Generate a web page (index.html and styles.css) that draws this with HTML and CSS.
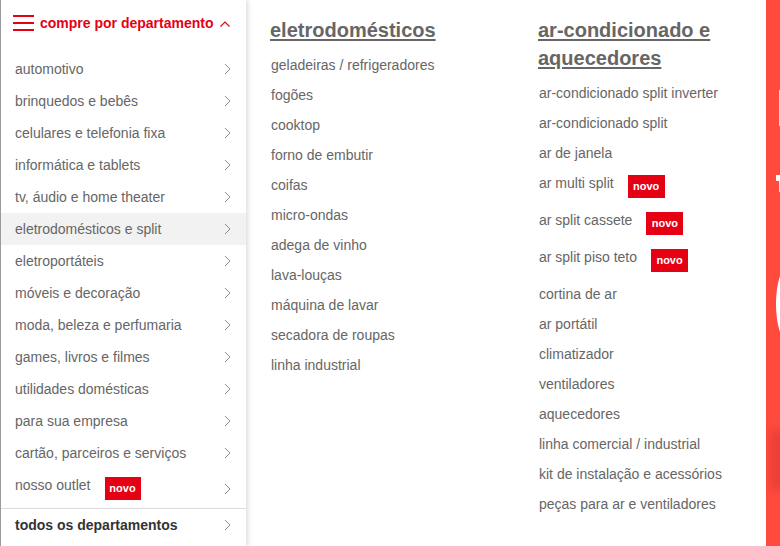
FILE: index.html
```html
<!DOCTYPE html>
<html lang="pt-BR">
<head>
<meta charset="utf-8">
<title>compre por departamento</title>
<link rel="stylesheet" href="styles.css">
</head>
<body>
<div class="page">
  <aside class="dept">
    <div class="dept-head">
      <span class="burger"><i></i><i></i><i></i></span>
      <span class="dept-title">compre por departamento</span>
      <svg class="up" width="10" height="6" viewBox="0 0 10 6"><polyline points="0.5,5.5 5,1 9.5,5.5" fill="none" stroke="#e60014" stroke-width="1.2"/></svg>
    </div>
    <ul class="dept-list">
      <li class="dept-item"><span class="lbl">automotivo</span><svg class="chev" width="7" height="12" viewBox="0 0 7 12"><polyline points="1,1 6,6 1,11" fill="none" stroke="#8a8a8a" stroke-width="1"/></svg></li>
      <li class="dept-item"><span class="lbl">brinquedos e bebês</span><svg class="chev" width="7" height="12" viewBox="0 0 7 12"><polyline points="1,1 6,6 1,11" fill="none" stroke="#8a8a8a" stroke-width="1"/></svg></li>
      <li class="dept-item"><span class="lbl">celulares e telefonia fixa</span><svg class="chev" width="7" height="12" viewBox="0 0 7 12"><polyline points="1,1 6,6 1,11" fill="none" stroke="#8a8a8a" stroke-width="1"/></svg></li>
      <li class="dept-item"><span class="lbl">informática e tablets</span><svg class="chev" width="7" height="12" viewBox="0 0 7 12"><polyline points="1,1 6,6 1,11" fill="none" stroke="#8a8a8a" stroke-width="1"/></svg></li>
      <li class="dept-item"><span class="lbl">tv, áudio e home theater</span><svg class="chev" width="7" height="12" viewBox="0 0 7 12"><polyline points="1,1 6,6 1,11" fill="none" stroke="#8a8a8a" stroke-width="1"/></svg></li>
      <li class="dept-item active"><span class="lbl">eletrodomésticos e split</span><svg class="chev" width="7" height="12" viewBox="0 0 7 12"><polyline points="1,1 6,6 1,11" fill="none" stroke="#8a8a8a" stroke-width="1"/></svg></li>
      <li class="dept-item"><span class="lbl">eletroportáteis</span><svg class="chev" width="7" height="12" viewBox="0 0 7 12"><polyline points="1,1 6,6 1,11" fill="none" stroke="#8a8a8a" stroke-width="1"/></svg></li>
      <li class="dept-item"><span class="lbl">móveis e decoração</span><svg class="chev" width="7" height="12" viewBox="0 0 7 12"><polyline points="1,1 6,6 1,11" fill="none" stroke="#8a8a8a" stroke-width="1"/></svg></li>
      <li class="dept-item"><span class="lbl">moda, beleza e perfumaria</span><svg class="chev" width="7" height="12" viewBox="0 0 7 12"><polyline points="1,1 6,6 1,11" fill="none" stroke="#8a8a8a" stroke-width="1"/></svg></li>
      <li class="dept-item"><span class="lbl">games, livros e filmes</span><svg class="chev" width="7" height="12" viewBox="0 0 7 12"><polyline points="1,1 6,6 1,11" fill="none" stroke="#8a8a8a" stroke-width="1"/></svg></li>
      <li class="dept-item"><span class="lbl">utilidades domésticas</span><svg class="chev" width="7" height="12" viewBox="0 0 7 12"><polyline points="1,1 6,6 1,11" fill="none" stroke="#8a8a8a" stroke-width="1"/></svg></li>
      <li class="dept-item"><span class="lbl">para sua empresa</span><svg class="chev" width="7" height="12" viewBox="0 0 7 12"><polyline points="1,1 6,6 1,11" fill="none" stroke="#8a8a8a" stroke-width="1"/></svg></li>
      <li class="dept-item"><span class="lbl">cartão, parceiros e serviços</span><svg class="chev" width="7" height="12" viewBox="0 0 7 12"><polyline points="1,1 6,6 1,11" fill="none" stroke="#8a8a8a" stroke-width="1"/></svg></li>
      <li class="dept-item"><span class="lbl">nosso outlet</span><span class="badge">novo</span><svg class="chev" width="7" height="12" viewBox="0 0 7 12"><polyline points="1,1 6,6 1,11" fill="none" stroke="#8a8a8a" stroke-width="1"/></svg></li>
      <li class="dept-item all"><span class="lbl">todos os departamentos</span><svg class="chev" width="7" height="12" viewBox="0 0 7 12"><polyline points="1,1 6,6 1,11" fill="none" stroke="#8a8a8a" stroke-width="1"/></svg></li>
    </ul>
  </aside>

  <main class="sub">
    <section class="col col-a">
      <h2 class="col-title">eletrodomésticos</h2>
      <ul class="links">
        <li class="link">geladeiras / refrigeradores</li>
        <li class="link">fogões</li>
        <li class="link">cooktop</li>
        <li class="link">forno de embutir</li>
        <li class="link">coifas</li>
        <li class="link">micro-ondas</li>
        <li class="link">adega de vinho</li>
        <li class="link">lava-louças</li>
        <li class="link">máquina de lavar</li>
        <li class="link">secadora de roupas</li>
        <li class="link">linha industrial</li>
      </ul>
    </section>
    <section class="col col-b">
      <h2 class="col-title">ar-condicionado e aquecedores</h2>
      <ul class="links">
        <li class="link">ar-condicionado split inverter</li>
        <li class="link">ar-condicionado split</li>
        <li class="link">ar de janela</li>
        <li class="link">ar multi split<span class="badge">novo</span></li>
        <li class="link">ar split cassete<span class="badge">novo</span></li>
        <li class="link">ar split piso teto<span class="badge">novo</span></li>
        <li class="link">cortina de ar</li>
        <li class="link">ar portátil</li>
        <li class="link">climatizador</li>
        <li class="link">ventiladores</li>
        <li class="link">aquecedores</li>
        <li class="link">linha comercial / industrial</li>
        <li class="link">kit de instalação e acessórios</li>
        <li class="link">peças para ar e ventiladores</li>
      </ul>
    </section>
  </main>

  <div class="banner">
    <span class="mark m1"></span>
    <span class="mark m2"></span>
    <span class="mark m2b"></span>
    <span class="mark m3"></span>
    <span class="smudge"></span>
  </div>
</div>
</body>
</html>
```

FILE: styles.css
```css
* { box-sizing: border-box; }
html, body { margin: 0; padding: 0; }
body {
  width: 780px;
  height: 546px;
  overflow: hidden;
  background: #fff;
  font-family: "Liberation Sans", Arial, sans-serif;
  font-size: 14px;
  color: #666;
}
ul { list-style: none; margin: 0; padding: 0; }

.page {
  display: flex;
  height: 546px;
}

/* left department panel */
.dept {
  position: relative;
  z-index: 2;
  width: 246px;
  flex: none;
  background: #fff;
  box-shadow: 2px 0 5px rgba(0,0,0,0.14);
  border-left: 1px solid #9a9a9a;
}
.dept-head {
  display: flex;
  align-items: center;
  height: 46px;
  padding-left: 12px;
  color: #e60014;
}
.burger {
  display: flex;
  flex-direction: column;
  gap: 5px;
  width: 21px;
  margin-right: 6px;
}
.burger i {
  display: block;
  height: 2px;
  background: #e60014;
}
.dept-title {
  font-weight: bold;
  font-size: 14px;
}
.up { margin-left: 7px; margin-top: 1px; }

.dept-list { padding-top: 7px; }
.dept-item {
  display: flex;
  align-items: flex-start;
  padding: 8px 15px 8px 14px;
  line-height: 16px;
  color: #666;
}
.dept-item .chev {
  margin-left: auto;
  align-self: center;
}
.dept-item.active { background: #f2f2f2; }
.dept-item.all {
  border-top: 1px solid #dcdcdc;
  color: #333;
  font-weight: bold;
}

.badge {
  display: inline-block;
  width: 37px;
  height: 23px;
  line-height: 23px;
  margin-left: 14px;
  background: #e60014;
  color: #fff;
  font-weight: bold;
  font-size: 11px;
  text-align: center;
}
.dept-item .badge { width: 36px; }

/* submenu */
.sub {
  display: flex;
  width: 520px;
  flex: none;
  padding: 16px 0 0 24px;
  background: #fff;
}
.col-a { width: 268px; }
.col-b { width: 220px; }
.col-title {
  margin: 0 0 6px;
  font-size: 20px;
  line-height: 28px;
  font-weight: bold;
  color: #666;
  text-decoration: underline;
  text-underline-offset: 2px;
  text-decoration-thickness: 2px;
}
.links .link {
  display: flex;
  align-items: flex-start;
  padding: 7px 0 7px 1px;
  line-height: 16px;
  color: #666;
}

/* red banner edge */
.banner {
  position: relative;
  flex: 1;
  background: #ff4b3e;
  overflow: hidden;
}
.mark {
  position: absolute;
  background: #fff;
}
.m1 { left: 13px; top: 90px; width: 2px; height: 36px; opacity: 0.75; }
.m2 { left: 10px; top: 175px; width: 4px; height: 6px; }
.m2b { left: 13px; top: 175px; width: 2px; height: 17px; opacity: 0.8; }
.m3 {
  left: 10px; top: 268px; width: 22px; height: 72px;
  background: transparent;
  border: 4px solid #fff;
  border-radius: 50%;
}
.smudge {
  position: absolute;
  left: 4px; top: 430px; width: 16px; height: 60px;
  background: rgba(200, 40, 40, 0.35);
  filter: blur(4px);
}
```
